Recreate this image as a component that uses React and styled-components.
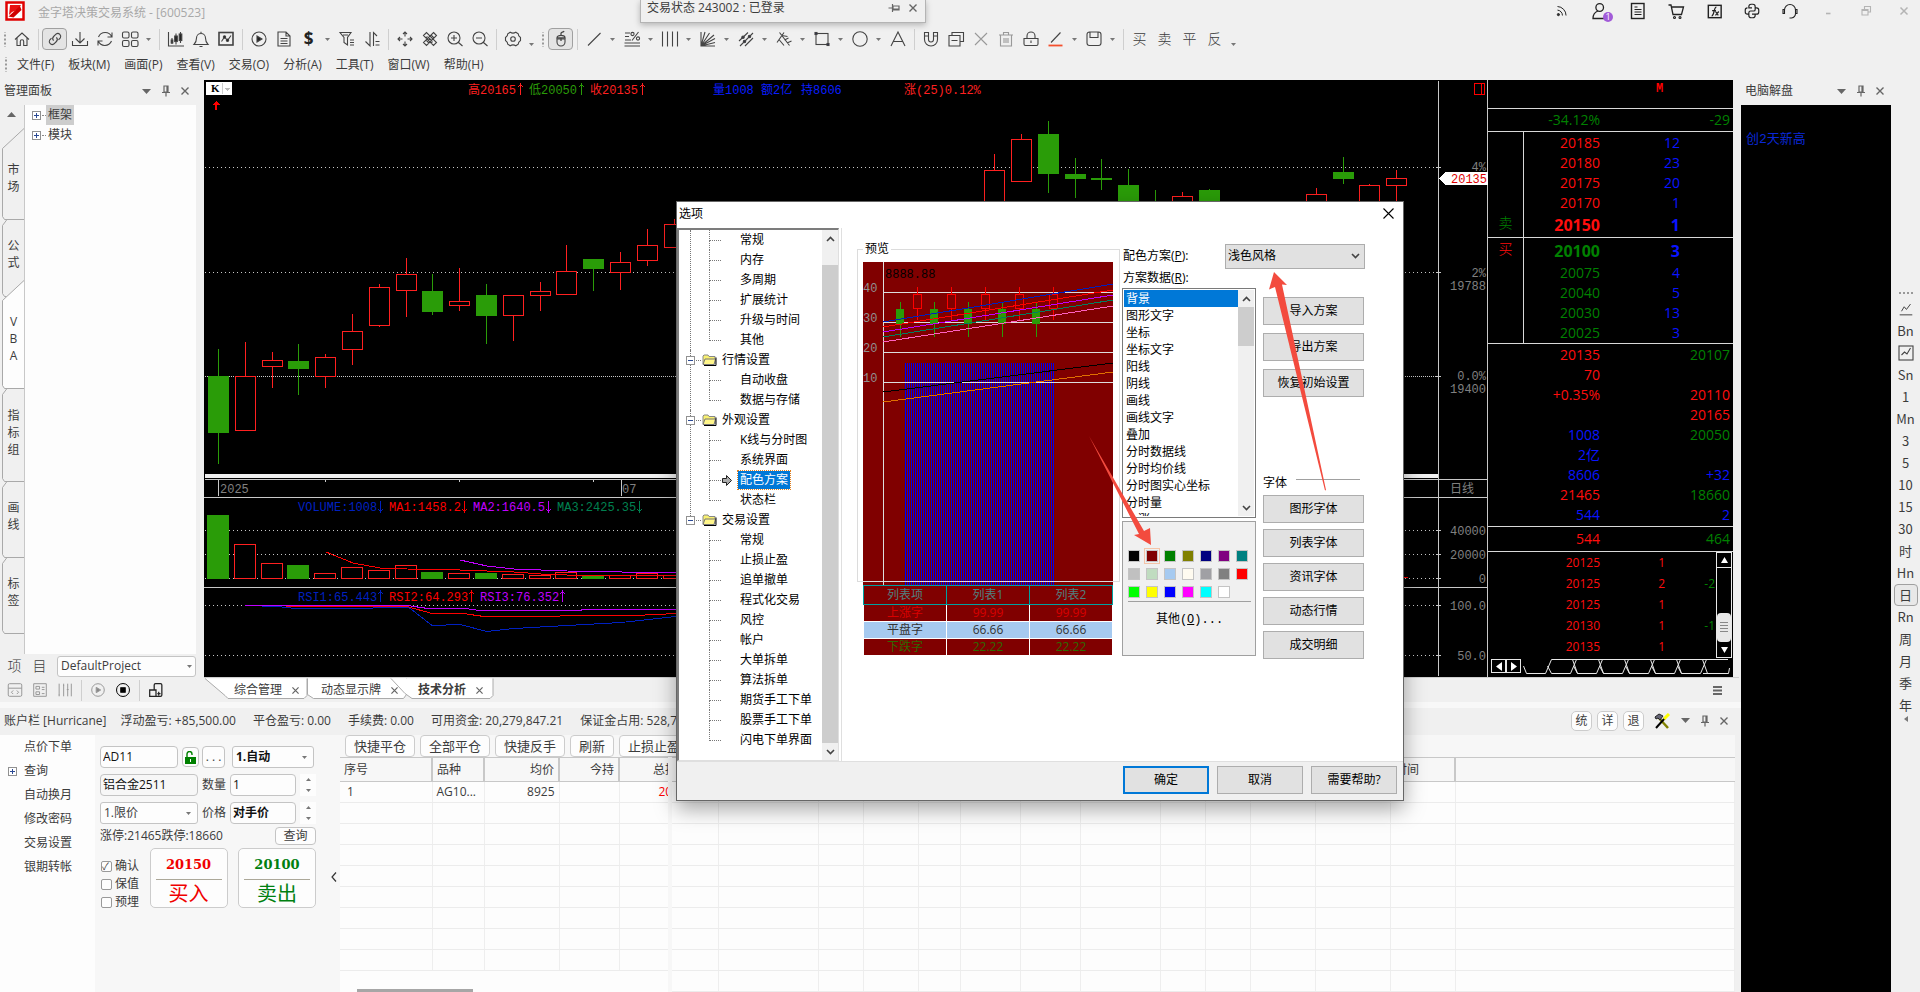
import React, { useState } from 'react'
import styled, { createGlobalStyle, css } from 'styled-components'

const GlobalStyle = createGlobalStyle`
    * { box-sizing: border-box; }
    html, body { margin: 0; height: 100%; overflow: hidden; }
    body, button, input, select {
        font-family: "Open Sans", "Noto Sans CJK SC", sans-serif;
        font-size: 12px;
        line-height: 16px;
        color: #3c3c3c;
    }
    body { background: #f0f0f0; }
    #root { height: 100%; }
    button { margin: 0; padding: 0; border: 0; background: none; white-space: nowrap; }
    ul { list-style: none; margin: 0; padding: 0; }
    svg { display: block; flex: none; }
    table { border-collapse: collapse; table-layout: fixed; }
`

const MONO = '"Liberation Mono", "Noto Sans CJK SC", monospace'

/* ---------- toolbar drawings, all on a 20x20 grid ---------- */

const ICONS = {
    home: <path d="M3 10.5L10 4l7 6.5M5 9v7.5h3.3v-4a1.7 1.7 0 0 1 3.4 0v4H15V9" />,
    link: <path d="M8.6 11.6a3 3 0 0 1 0-4.1l2.6-2.6a3 3 0 0 1 4.1 4.1l-1.8 1.8M11.4 8.4a3 3 0 0 1 0 4.1l-2.6 2.6A3 3 0 0 1 4.7 11l1.8-1.8" />,
    download: <path d="M10 3v10.5M5.5 9.5L10 14l4.500-4.5M2.500 12v4.5h15V12" />,
    refresh: <path d="M16.8 8A7.2 7.2 0 0 0 3.5 8M17 3.5V8h-4.5M3.2 12a7.2 7.2 0 0 0 13.3 0M3 16.5V12h4.5" />,
    grid: <><rect x="2.5" y="3" width="6.5" height="6" rx="1.5" /><rect x="11.5" y="3" width="6.5" height="6" rx="1.5" /><rect x="2.5" y="11.5" width="6.5" height="6" rx="1.5" /><rect x="11.5" y="11.5" width="6.5" height="6" rx="1.5" /></>,
    candles: <><path d="M2.5 3v14H18M6 9v6M10 4.5v11M14.5 3v11" /><g fill="#222"><rect x="5.2" y="11" width="1.6" height="3" /><rect x="8.7" y="7" width="2.600" height="5.5" /><rect x="13.2" y="5" width="2.6" height="6.5" /></g></>,
    bell: <path d="M3 15.5c2-2 2.500-3.5 2.5-6.5a4.500 4.5 0 0 1 9 0c0 3 .5 4.5 2.5 6.5zM10 4.500V2.8M8.5 17.5h3" />,
    chartBox: <><rect x="3" y="3.5" width="14" height="12.5" strokeWidth="1.6" /><path d="M5.5 12.5L8.500 8l3 3.5L15 6.5" /><g fill="#222"><circle cx="8.5" cy="8" r="1.2" /><circle cx="11.5" cy="11.200" r="1.2" /></g></>,
    play: <><circle cx="10" cy="10" r="7" /><path d="M8 7l5 3-5 3z" fill="#222" /></>,
    doc: <path d="M4 3h8l4 4v10H4zM12 3v4h4M6.5 9.5h7M6.5 12h7M6.5 14.5h7" />,
    filter: <path d="M3 3.500h11l-3.5 5V16L7 13.5v-5zM6 6h5M13 11h4M13 13.5h4M13 16h4" />,
    sort: <path d="M8 3v14l-4.5-4.5M11.5 17V3.5L15 7M13.5 12.5h4M13.5 16h4" />,
    move: <path d="M10 3v4.500M10 12.5V17M3 10h4.5M12.5 10H17M8 5l2-2 2 2M8 15l2 2 2-2M5 8l-2 2 2 2M15 8l2 2-2 2" />,
    ruler: <><path d="M3.5 6.5l3-3 10 10-3 3zM6 9l1.500-1.5M8.5 11.5L10 10M11 14l1.5-1.5" /><path d="M13.5 3.5l3 3-10 10-3-3zM11 6l3 3M8.5 8.5l3 3M6 11l3 3" /></>,
    zoomIn: <path d="M15 9a6 6 0 1 1-12 0 6 6 0 0 1 12 0zM13.5 13.500L17.5 17M9 6v6M6 9h6" />,
    zoomOut: <path d="M15 9a6 6 0 1 1-12 0 6 6 0 0 1 12 0zM13.5 13.5L17.5 17M6 9h6" />,
    gear: <><circle cx="10" cy="10" r="2.3" /><path d="M7.2 3.2c1.6 1 4 1 5.600 0l2.400 1.500c0 1.500.8 2.800 2.300 3.800v3c-1.500 1-2.300 2.300-2.300 3.800l-2.400 1.500c-1.600-1-4-1-5.600 0l-2.400-1.500c0-1.500-.8-2.800-2.300-3.800v-3c1.500-1 2.300-2.300 2.300-3.800z" /></>,
    mouse: <><path d="M6 10h8v3a4 4 0 0 1-8 0z" /><path d="M6 9c0-3.500 8-3.500 8 0zM10 7V4.500c0-1.5 2.500-1 3-2.5M10 9v3" strokeWidth="1.3" /></>,
    line: <path d="M4 16.5L16.5 4" />,
    percent: <><path d="M3 4h5M3 7.5h4M3 11h6M2.5 14H18M2.5 17H18M10 11.5L16.5 3" /><circle cx="10.5" cy="5" r="1.6" /><circle cx="16" cy="9.5" r="1.6" /></>,
    verticals: <path d="M2.5 2.5v15M7.500 2.5v15M12.5 2.500v15M17.5 2.5v15" />,
    fan: <path d="M3 3v14h14M3 17L7 3M3 17l8.500-13M3 17L16 6M3 17l14-7.500M3 17l14-3.500" />,
    channel: <><path d="M3 12L12 3.500M4 17L17 4M9 17l8-8" /><g fill="#334"><circle cx="7" cy="8.3" r="1.2" /><circle cx="8.5" cy="12.500" r="1.2" /><circle cx="13.5" cy="7.5" r="1.2" /></g></>,
    fork: <path d="M3 13.500L10 3.500M5.500 3.500l10 13M5 10.500l5 6M8 6.500l5.500 1M10.500 11l4-2M13 14l4.500-2" />,
    rect: <><rect x="4" y="4.5" width="12" height="11" /><g fill="#225"><rect x="3" y="3.5" width="2" height="2" /><rect x="15" y="14.5" width="2" height="2" /></g></>,
    circle: <circle cx="10" cy="10" r="7.2" />,
    letterA: <path d="M3 17l7-14 7 14M5.500 12.5h9" />,
    magnet: <path d="M3.5 3.5v7a6.500 6.5 0 0 0 13 0v-7h-4v7a2.500 2.5 0 0 1-5 0v-7zM3.5 7h4M12.5 7h4" />,
    copy: <path d="M6 6.5v-3h11.5v9H14M3 6.5h11V17H3zM5.5 11.5h6" />,
    cross: <path d="M4 4l12 12M16 4L4 16" />,
    trash: <path d="M3 6h14M7.5 6V3.5h5V6M4.5 6v11h11V6M8 9v5M10 9v5M12 9v5" />,
    lock: <path d="M3 9.500h14V15q0 1.500-1.500 1.500h-11Q3 16.500 3 15zM6 9V7a4 4 0 0 1 8 0v2M10 11.500V14" />,
    pen: <><path d="M5 13.500l9.500-10" /><path d="M2.5 16.500h14" stroke="#f4502e" strokeWidth="1.8" /></>,
    save: <path d="M5.500 3h9A2.500 2.500 0 0 1 17 5.500V14a2.500 2.500 0 0 1-2.500 2.500h-9A2.500 2.500 0 0 1 3 14V5.500A2.500 2.500 0 0 1 5.500 3zM6 3v5.500h8V3" />,
    rss: <><path d="M5 5a10 10 0 0 1 9.500 10M5 9a6 6 0 0 1 5.500 6" /><circle cx="6" cy="14" r="1.2" fill="#333" /></>,
    user: <path d="M13.500 6.500a3.800 3.800 0 1 1-7.600 0 3.800 3.800 0 0 1 7.600 0zM8 10c-3 1-5 3-5 7.500h13.500c0-2-.5-4-1.500-5" strokeWidth="1.3" />,
    news: <><rect x="3.5" y="2.5" width="12.5" height="15" strokeWidth="1.4" /><path d="M6.5 6h3M6.5 8.5h7M6.5 11h7M6.5 13.5h7" /></>,
    cart: <><path d="M2.500 4H5l2 9.500h8.500L17.500 6H6" strokeWidth="1.3" /><circle cx="8.5" cy="16.5" r="1" /><circle cx="14" cy="16.5" r="1" /></>,
    fx: <><rect x="3.5" y="3.5" width="13.5" height="13" strokeWidth="1.5" /><path d="M12 5.500c-3 0-2 9-5 9M7.500 9h4M11 10l3 4M14.500 10L11 14" strokeWidth="1.3" /></>,
    python: <path d="M10 6.500H6.500V5Q6.500 2.500 9 2.500h2Q13.500 2.500 13.500 5v3.500Q13.500 10 12 10H8.500Q6.500 10 6.500 12v1.500H5q-2.500 0-2.500-2.500V9Q2.500 6.500 5 6.500M10 13.500h3.500V15q0 2.500-2.500 2.500H9Q6.500 17.500 6.500 15v-2M13.500 6.500H15Q17.500 6.500 17.500 9v2q0 2.500-2.500 2.500h-2" strokeWidth="1.3" />,
    headset: <path d="M4.5 12V9a5.500 5.500 0 0 1 11 0v3M4.500 8.500H3v4h1.500zM15.500 8.500H17v4h-1.500zM15.500 12.500c0 2.500-1.500 4-4 4.500h-2" strokeWidth="1.1" />,
    minimize: <path d="M8 12.5h4.500" strokeWidth="1.6" />,
    restore: <path d="M8.5 8V5.500h6V11H12M6 8.500h6V14H6zM6 9.500h6" />,
    close: <path d="M6.5 6.5l7 7M13.500 6.500l-7 7" strokeWidth="1.5" />,
    codeWin: <path d="M4 3h12q1.500 0 1.500 1.500v11Q17.500 17 16 17H4q-1.500 0-1.500-1.500v-11Q2.500 3 4 3zM2.500 8h15M8 10.500l-2 2 2 2M12 10.500l2 2-2 2" />,
    formWin: <path d="M3 3h14v14H3zM5.500 6h4v3h-4zM5.500 12h4v3h-4zM12 7h3M12 9.500h3M12 14h3" />,
    sliders: <path d="M3.500 3v14M8.500 3v14M13 3v14M17 3v14M12 9.500h2M3 15.500h1M8 5h1" />,
    stop: <><circle cx="10" cy="10" r="7.2" /><rect x="7.5" y="7.5" width="5" height="5" fill="#000" /></>,
    tiles: <path d="M8 10V4.500Q8 3 9.500 3H15q1.500 0 1.500 1.500v11Q16.500 17 15 17H3v-7h5zM3 13.500V10M8 10h2v7M13 12v4M11.500 14h3.500" strokeWidth="1.4" />,
    trend: <path d="M5 12.5l3-5 2.5 3L15 4.500M3 16.500h14" />,
    trendBox: <><rect x="3" y="3" width="14" height="14" /><path d="M5.500 12l3-3 2.500 2 3.500-6" /></>,
}

const Icon = ({ name, size = 20, color = '#444' }) => (
    <svg width={size} height={size} viewBox="0 0 20 20" fill="none" stroke={color} strokeWidth="1.1" aria-hidden="true">
        {ICONS[name]}
    </svg>
)

const Caret = () => (
    <svg width="9" height="5" viewBox="0 0 9 5" aria-hidden="true"><path d="M0 0h9L4.500 5z" fill="#666" /></svg>
)

const TinyCaret = () => (
    <svg width="5" height="3" viewBox="0 0 5 3" aria-hidden="true"><path d="M0 0h5L2.500 3z" fill="#777" /></svg>
)

const Pin = () => (
    <svg width="10" height="12" viewBox="0 0 10 12" fill="none" stroke="#666" strokeWidth="1.2" aria-hidden="true">
        <path d="M3 1h4v6H3zM6 1v6M1 7.500h8M5 7.500v4" />
    </svg>
)

const SmallX = ({ size = 8, color = '#666' }) => (
    <svg width={size} height={size} viewBox="0 0 8 8" stroke={color} strokeWidth="1.4" aria-hidden="true">
        <path d="M.5.5l7 7M7.500.5l-7 7" />
    </svg>
)

/* ---------- window frame ---------- */

const Shell = styled.div`
    display: flex;
    flex-direction: column;
    height: 100vh;
`

const TitleBar = styled.header`
    display: flex;
    align-items: center;
    height: 25px;
    padding: 0 4px 3px 5px;
    color: #a8a8a8;
`

const TitleText = styled.span`
    margin-left: 13px;
    padding-top: 3px;
    flex: 1;
    color: #a8a8a8;
`

const TitleActions = styled.div`
    display: flex;
    align-items: center;
    gap: 14px;
`

const TitleButton = styled.button`
    display: grid;
    place-items: center;
    width: 24px;
    height: 22px;
`

const Badge = styled.span`
    position: absolute;
    left: 15px;
    top: 12px;
    width: 10px;
    height: 10px;
    border-radius: 5px;
    background: #a25bd8;
    color: #fff;
    font-size: 9px;
    line-height: 10px;
    text-align: center;
`

const UserButton = styled(TitleButton)`
    position: relative;
`

const StatusWindow = styled.div`
    position: absolute;
    top: 0;
    left: 640px;
    z-index: 5;
    display: flex;
    align-items: center;
    width: 286px;
    height: 23px;
    padding: 0 8px 7px 6px;
    background: #f0f0f0;
    border: 1px solid #b4b4b4;
    border-top: 0;
    box-shadow: 0 2px 6px rgba(0,0,0,0.25);
    span { flex: 1; }
    button:first-of-type { transform: rotate(90deg); margin-right: 10px; }
`

const Toolbar = styled.div`
    display: flex;
    align-items: center;
    height: 28px;
`

const Grip = styled.i`
    width: ${p => p.$w || 9}px;
    height: 15px;
    flex: none;
    background: radial-gradient(circle, #999 1px, transparent 1px) center / 4px 4px repeat-y;
`

const Separator = styled.i`
    flex: none;
    width: 8px;
    height: 21px;
    background: linear-gradient(#cfcfcf, #cfcfcf) center / 1px 100% no-repeat;
`

const ToolButton = styled.button`
    flex: none;
    display: grid;
    place-items: center;
    width: 25px;
    height: 22px;
    border-radius: 4px;
    ${p => p.$active && css`
        border: 1px solid #a0a0a0;
        background: #e4e4e4;
    `}
    ${p => p.$bold && css`
        font-size: 17px;
        font-weight: 700;
        color: #222;
    `}
    ${p => p.$glyph && css`
        font-size: 14px;
        font-weight: 300;
    `}
    ${p => p.$dim && css`opacity: 0.5;`}
`

const DropArrow = styled.button`
    flex: none;
    display: grid;
    place-items: ${p => (p.$low ? 'end center' : 'center')};
    width: 13px;
    height: 14px;
`

const MenuBar = styled.nav`
    display: flex;
    align-items: center;
    height: 27px;
    padding: 0 0 4px 1px;
`

const MenuItem = styled.button`
    padding: 0 7px;
`

const Main = styled.div`
    flex: 1;
    display: flex;
    min-height: 0;
`

const Workspace = styled.div`
    flex: 1;
    min-width: 0;
    display: flex;
    flex-direction: column;
`

const UpperRow = styled.div`
    flex: 1;
    min-height: 0;
    display: flex;
`

/* ---------- docked panels ---------- */

const SidePanel = styled.aside`
    flex: none;
    width: 204px;
    display: flex;
    flex-direction: column;
    padding-right: 8px;
`

const PanelHeadBar = styled.div`
    display: flex;
    align-items: center;
    flex: none;
    height: 25px;
    padding: 0 7px 3px 4px;
    gap: 10px;
    span { flex: 1; }
    button { display: grid; place-items: center; }
`

const PanelHead = ({ title }) => (
    <PanelHeadBar>
        <span>{title}</span>
        <button aria-label="菜单"><Caret /></button>
        <button aria-label="固定"><Pin /></button>
        <button aria-label="关闭"><SmallX /></button>
    </PanelHeadBar>
)

const PanelBody = styled.div`
    flex: 1;
    min-height: 0;
    display: flex;
`

const TabStrip = styled.div`
    position: relative;
    width: 24px;
    display: flex;
    flex-direction: column;
    padding-top: 7px;
    > svg:first-child { position: absolute; inset: 0; }
`

const StripArrow = styled.button`
    position: relative;
    height: 5px;
    display: grid;
    place-items: center;
    margin-bottom: 19px;
    transform: rotate(180deg);
`

const SideTab = styled.button`
    position: relative;
    display: flex;
    flex-direction: column;
    align-items: center;
    justify-content: center;
    height: ${p => p.$h}px;
    padding-left: 3px;
    line-height: 17px;
    span { display: block; line-height: 17px; }
`

const ModuleTree = styled.ul`
    flex: 1;
    background: #fdfdfd;
    border-left: 1px solid #c8c8c8;
    padding-left: 7px;
    li { display: flex; align-items: center; height: 20px; }
    i { width: 4px; margin-left: 1px; border-top: 1px dotted #888; }
`

const TreeLabel = styled.span`
    padding: 0 2px;
    line-height: 20px;
    background: ${p => (p.$selected ? '#cdcdcd' : 'transparent')};
`

const PlusBox = () => (
    <svg width="9" height="9" viewBox="0 0 9 9" fill="#fff" aria-hidden="true">
        <rect x=".5" y=".5" width="8" height="8" stroke="#919191" />
        <path d="M2 4.500h5M4.500 2v5" stroke="#2b4a94" />
    </svg>
)

const PanelFoot = styled.div`
    flex: none;
    height: 48px;
    padding-left: 2px;
`

const FootRow = styled.div`
    display: flex;
    align-items: center;
    height: 24px;
`

/* drop-down with its arrow laid in the same cell */
const SelectBox = styled.span`
    display: inline-grid;
    align-items: center;
    width: ${p => (p.$w ? p.$w + 'px' : 'auto')};
    flex: ${p => (p.$w ? 'none' : 1)};
    select, svg { grid-area: 1 / 1; }
    svg { justify-self: end; margin-right: 7px; pointer-events: none; }
    select {
        appearance: none;
        width: 100%;
        min-width: 0;
        height: 22px;
        padding: 0 3px;
        border: 1px solid #c4c4c4;
        border-radius: 3px;
        background: #fdfdfd;
        font-weight: ${p => (p.$bold ? 700 : 400)};
    }
`

const ProjectSelect = styled(SelectBox)`
    margin-left: 5px;
    select { height: 21px; }
    svg { margin-right: 4px; }
`

const ModeSelect = styled(SelectBox)`
    margin-left: 7px;
    select { color: #111; }
`

// label and height of each vertical tab
const SIDE_TABS = [['市场', 84], ['公式', 68], ['VBA', 101], ['指标组', 86], ['画线', 82], ['标签', 70]]

const Side = () => (
    <SidePanel>
        <PanelHead title="管理面板" />
        <PanelBody>
            <TabStrip>
                <svg width="24" height="549" viewBox="0 0 24 549" fill="none" stroke="#a9a9a9" aria-hidden="true">
                    <path d="M24 23.500L2.500 43.500v68l2 3H24M7 114.500l-4.500 6v68l2 3h2" />
                    <path d="M24 175.500L2.500 195.500v85l2 3H24" fill="#fdfdfd" />
                    <path d="M7 283.500l-4.500 6v84l2 3H24M7 376.500l-4.500 6v67l2 3H24M7 452.500l-4.500 6v67l2 3H24" />
                </svg>
                <StripArrow aria-label="上滚"><Caret /></StripArrow>
                {SIDE_TABS.map(([name, h]) => (
                    <SideTab key={name} $h={h}>{[...name].map(c => <span key={c}>{c}</span>)}</SideTab>
                ))}
            </TabStrip>
            <ModuleTree>
                <li><PlusBox /><i /><TreeLabel $selected>框架</TreeLabel></li>
                <li><PlusBox /><i /><TreeLabel>模块</TreeLabel></li>
            </ModuleTree>
        </PanelBody>
        <PanelFoot>
            <FootRow>
                <ToolButton $glyph>项</ToolButton>
                <ToolButton $glyph>目</ToolButton>
                <ProjectSelect>
                    <select aria-label="项目" defaultValue="DefaultProject"><option>DefaultProject</option></select>
                    <TinyCaret />
                </ProjectSelect>
            </FootRow>
            <FootRow>
                <ToolButton $dim aria-label="代码"><Icon name="codeWin" size={18} /></ToolButton>
                <ToolButton $dim aria-label="窗体"><Icon name="formWin" size={18} /></ToolButton>
                <ToolButton $dim aria-label="参数"><Icon name="sliders" size={18} /></ToolButton>
                <Separator />
                <ToolButton $dim aria-label="运行"><Icon name="play" size={18} /></ToolButton>
                <ToolButton aria-label="停止"><Icon name="stop" size={18} color="#000" /></ToolButton>
                <Separator />
                <ToolButton aria-label="组件"><Icon name="tiles" size={18} color="#222" /></ToolButton>
            </FootRow>
        </PanelFoot>
    </SidePanel>
)

/* ---------- chart ---------- */

const RED = '#ff2020'
const GREEN = '#2a9c08'

// [centre x, body top, body bottom, high, low, rising]
const CANDLES = [
    [219, 376, 432, 349, 464, 0], [246, 376, 430, 342, 430, 1], [273, 360, 366, 352, 388, 1],
    [299, 361, 368, 344, 395, 0], [326, 357, 376, 354, 388, 1], [353, 331, 349, 314, 365, 1],
    [380, 287, 325, 284, 327, 1], [407, 274, 290, 258, 317, 1], [433, 291, 311, 274, 315, 0],
    [460, 301, 305, 268, 311, 1], [487, 295, 315, 284, 344, 0], [514, 295, 315, 295, 341, 1],
    [541, 291, 295, 282, 311, 1], [567, 271, 294, 245, 294, 1], [594, 259, 268, 259, 291, 0],
    [621, 262, 272, 252, 290, 1], [648, 245, 260, 229, 266, 1], [675, 224, 247, 219, 247, 1],
    [995, 170, 230, 154, 230, 1], [1022, 139, 181, 134, 181, 1], [1049, 134, 173, 121, 193, 0],
    [1076, 174, 178, 158, 198, 0], [1102, 178, 179, 159, 190, 0], [1129, 185, 215, 169, 215, 0],
    [1156, 201, 215, 190, 215, 0], [1183, 196, 215, 192, 215, 1], [1210, 190, 215, 189, 215, 0],
    [1317, 194, 215, 188, 215, 1], [1344, 172, 178, 157, 184, 0], [1370, 185, 215, 184, 215, 1],
    [1397, 178, 185, 170, 201, 1],
]

const VOLUMES = [515, 544, 563, 565, 573, 567, 570, 565, 572, 573, 573, 574, 575, 572, 575, 575, 573, 575]

const ChartSvg = styled.svg`
    flex: 1;
    min-width: 0;
    width: 100%;
    height: 100%;
    background: #000;
    font-family: ${MONO};
    font-size: 12px;
    shape-rendering: crispEdges;
`

const AXIS_LABELS = [
    ['4%', 171], ['2%', 277], ['19788', 290], ['0.0%', 380], ['19400', 393],
    ['40000', 535], ['20000', 559], ['0', 583], ['100.0', 610], ['50.0', 660],
]

const HEAD_LABELS = [
    [468, 94, '#ff2020', '高20165', 1], [529, 94, GREEN, '低20050', 1], [590, 94, '#ff2020', '收20135', 1],
    [713, 94, '#0a1eff', '量1008'], [761, 94, '#0a1eff', '额2亿'], [801, 94, '#0a1eff', '持8606'],
    [904, 94, '#ff2020', '涨(25)0.12%'],
    [298, 511, '#0020c0', 'VOLUME:1008', -1], [389, 511, '#ff0000', 'MA1:1458.2', -1],
    [473, 511, '#c000ff', 'MA2:1640.5', -1], [557, 511, '#008050', 'MA3:2425.35', -1],
    [298, 601, '#0020c0', 'RSI1:65.443', 1], [389, 601, '#ff0000', 'RSI2:64.293', 1], [480, 601, '#c000ff', 'RSI3:76.352', 1],
]

const HeadLabel = ({ x, y, fill, text, dir }) => {
    const cjk = /^[高低收]/.test(text)
    const ax = x + 3.5 + (cjk ? 12 + (text.length - 1) * 7 + 2 : text.length * 7 + 2)
    return (
        <g fill={fill} stroke="none">
            <text x={x} y={y}>{text}</text>
            {dir === 1 && <path d={`M${ax} ${y - 10}v11M${ax - 2} ${y - 7}l2-3 2 3`} fill="none" stroke={fill} />}
            {dir === -1 && <path d={`M${ax} ${y - 10}v11M${ax - 2} ${y - 2}l2 3 2-3`} fill="none" stroke={fill} />}
        </g>
    )
}

const PriceChart = () => (
    <ChartSvg viewBox="204 80 1284 597" preserveAspectRatio="xMinYMin slice" role="img" aria-label="K线图">
        <g stroke="#c8c8c8" strokeDasharray="1 3">
            {[167.5, 272.5, 530.5, 554.5, 578.5, 605.5, 655.5].map(y => <path key={y} d={`M205 ${y}H1438`} />)}
            <path d="M205 376.500H1438" strokeDasharray="1 1" />
        </g>
        {CANDLES.map(([x, top, bottom, high, low, up]) => (
            <g key={x} stroke={up ? RED : GREEN} fill={up ? '#000' : GREEN}>
                <path d={`M${x - 0.5} ${high}V${low}`} />
                <rect x={x - 10.5} y={top + 0.5} width="20" height={bottom - top - 0.5} />
            </g>
        ))}
        {VOLUMES.map((top, i) => {
            const [x, , , , , up] = CANDLES[i]
            return <rect key={x} x={x - 11.5} y={top + 0.5} width="21" height={578 - top} stroke={up ? RED : GREEN} fill={up ? '#000' : GREEN} />
        })}
        <g fill="none">
            <path d="M326 552l27 11 27 5 27 1 53 1 27 1 27 1 27 2 26 1h109" stroke="#f00" />
            <path d="M460 560l27 6 27 3 53 2 109 2" stroke="#c000ff" />
            <path d="M245 605.500l33 1 17 2h43l71-1 23 18 28-1 27 7 27-3 53-3 54-3 55-6" stroke="#0020c0" />
            <path d="M286 606.500h121l25 7h31l21 3h69l14-1h68l41-2" stroke="#f00" />
            <path d="M245 605.500h162l21 3h37l15 2h100l3-1h93" stroke="#c000ff" />
            <path d="M1398 577.500h10" stroke="#f00" />
        </g>
        <path d="M205 474h1233v4H205z" fill="#f0f0f0" />
        <g fill="none" stroke="#c8c8c8">
            <path d="M205 479.500h1282M204 497.500h1284M204 587.500h1284M1438.500 81v595M1487.500 80v597" />
            <path d="M218.500 480v16M621.500 480v16M325.500 480v2M459.500 480v2M593.500 480v2" />
            <path d="M1436 167.500h5M1436 272.500h5M1436 376.500h5M1436 530.500h5M1436 554.500h5M1436 578.500h5M1436 605.500h5M1436 655.500h5" />
        </g>
        <g fill="#808080">
            <text x="220" y="493">2025</text>
            <text x="622" y="493">07</text>
            <text x="1450" y="493">日线</text>
            {AXIS_LABELS.map(([t, y]) => <text key={t} x="1486" y={y} textAnchor="end">{t}</text>)}
        </g>
        {HEAD_LABELS.map(([x, y, fill, text, dir]) => <HeadLabel key={text} {...{ x, y, fill, text, dir }} />)}
        <path d="M1439 178.500l6-6.500h43v13h-43z" fill="#fff" />
        <text x="1487" y="183" fill="#e00000" textAnchor="end">20135</text>
        <path d="M1474.500 83.500h10v11h-10zM1481.500 83.500v11" fill="none" stroke="#f00" />
        <rect x="206" y="82" width="26" height="13" rx="1" fill="#fff" />
        <text x="211" y="92" fill="#000" fontFamily="Liberation Serif, serif" fontSize="11" fontWeight="700">K</text>
        <path d="M222.500 83v11" stroke="#ccc" />
        <path d="M225 88h5l-2.500 3z" fill="#bbb" />
        <path d="M216 101l4 4h-3v5h-2v-5h-3z" fill="#f00" />
    </ChartSvg>
)

/* ---------- quote panel ---------- */

const COLORS = { r: '#ff0d0d', g: '#008000', b: '#0a14ff' }

const Quotes = styled.section`
    flex: none;
    width: 245px;
    display: flex;
    flex-direction: column;
    background: #000;
    font-size: 14px;
`

const QuoteLine = styled.div`
    display: flex;
    align-items: center;
    height: ${p => p.$h}px;
    border-bottom: ${p => (p.$rule ? '1px solid #d8d8d8' : '0')};
    padding-right: 3px;
`

const Num = styled.span`
    width: ${p => p.$w}px;
    text-align: right;
    color: ${p => COLORS[p.$c]};
    white-space: nowrap;
`

const Marker = styled.div`
    margin: 0 auto 10px 168px;
    height: 16px;
    color: #f00;
    font-family: ${MONO};
    font-size: 12px;
    font-weight: 700;
`

const Book = styled.div`
    display: flex;
    height: 106px;
    border-bottom: 1px solid #d8d8d8;
`

const BookSide = styled.div`
    display: flex;
    align-items: ${p => (p.$end ? 'flex-end' : 'flex-start')};
    justify-content: center;
    width: 36px;
    padding: 2px 0 5px;
    border-right: 1px solid #d8d8d8;
    color: ${p => COLORS[p.$c]};
    font-weight: 300;
    font-size: 14px;
    line-height: 18px;
`

const BookTable = styled.table`
    margin-top: 1px;
    width: 156px;
    td {
        height: 20px;
        padding: 0;
        text-align: right;
        line-height: 20px;
        color: ${p => COLORS[p.$c]};
    }
    td + td { color: ${COLORS.b}; }
    tr.best td { height: 24px; font-size: 16px; font-weight: 700; line-height: 24px; }
`

const BookHalf = ({ side, sideColor, c, rows, bestLast }) => (
    <Book>
        <BookSide $end={bestLast} $c={sideColor}>{side}</BookSide>
        <BookTable $c={c}>
            <colgroup><col width="76" /><col width="80" /></colgroup>
            <tbody>
                {rows.map(([price, vol, best]) => (
                    <tr key={price} className={best ? 'best' : ''}><td>{price}</td><td>{vol}</td></tr>
                ))}
            </tbody>
        </BookTable>
    </Book>
)

const Stats = styled.div`
    padding-top: 1px;
    height: 183px;
    border-bottom: 1px solid #d8d8d8;
`

const STATS = [
    ['20135', 'r', '20107', 'g'], ['70', 'r', '', 'g'], ['+0.35%', 'r', '20110', 'r'],
    ['', 'r', '20165', 'r'], ['1008', 'b', '20050', 'g'], ['2亿', 'b', '', 'b'],
    ['8606', 'b', '+32', 'b'], ['21465', 'r', '18660', 'g'], ['544', 'b', '2', 'b'],
]

const Ticks = styled.div`
    flex: 1;
    display: flex;
    padding-right: 1px;
    table { width: 227px; font-size: 12px; }
    td { height: 21px; padding: 0; text-align: right; color: ${COLORS.r}; line-height: 16px; }
    td:last-child { color: ${COLORS.g}; }
`

const TickScroll = styled.div`
    width: 16px;
    margin-left: 1px;
    border: 1px solid #e8e8e8;
    display: flex;
    flex-direction: column;
    button { display: grid; place-items: center; height: 15px; }
    button:first-child { border-bottom: 1px solid #e8e8e8; }
`

const TickThumb = styled.div`
    margin-top: auto;
    height: 29px;
    border-radius: 4px;
    background: repeating-linear-gradient(#888 0 1px, #e8e8e8 1px 3px) center / 8px 11px no-repeat #e8e8e8;
`

const QuoteNav = styled.div`
    display: flex;
    align-items: flex-start;
    height: 19px;
    padding: 1px 0 0 3px;
    button { width: 15px; height: 14px; border: 1px solid #e8e8e8; display: grid; place-items: center; }
    > svg { margin-left: 2px; }
`

const QuotePanel = () => (
    <Quotes>
        <QuoteLine $h={29} $rule><Marker>M</Marker></QuoteLine>
        <QuoteLine $h={23} $rule><Num $w={112} $c="g">-34.12%</Num><Num $w={130} $c="g">-29</Num></QuoteLine>
        <BookHalf side="卖" sideColor="g" c="r" bestLast rows={[['20185', 12], ['20180', 23], ['20175', 20], ['20170', 1], ['20150', 1, true]]} />
        <BookHalf side="买" sideColor="r" c="g" rows={[['20100', 3, true], ['20075', 4], ['20040', 5], ['20030', 13], ['20025', 3]]} />
        <Stats>
            {STATS.map(([a, ac, b, bc]) => (
                <QuoteLine key={a + b} $h={20}><Num $w={112} $c={ac}>{a}</Num><Num $w={130} $c={bc}>{b}</Num></QuoteLine>
            ))}
        </Stats>
        <QuoteLine $h={25} $rule><Num $w={112} $c="r">544</Num><Num $w={130} $c="g">464</Num></QuoteLine>
        <Ticks>
            <table>
                <colgroup><col width="112" /><col width="65" /><col width="50" /></colgroup>
                <tbody>
                    <tr><td>20125</td><td>1</td><td /></tr>
                    <tr><td>20125</td><td>2</td><td>-2</td></tr>
                    <tr><td>20125</td><td>1</td><td /></tr>
                    <tr><td>20130</td><td>1</td><td>-1</td></tr>
                    <tr><td>20135</td><td>1</td><td /></tr>
                </tbody>
            </table>
            <TickScroll>
                <button aria-label="上滚"><svg width="7" height="6" viewBox="0 0 7 6"><path d="M3.500 0L7 6H0z" fill="#fff" /></svg></button>
                <TickThumb />
                <button aria-label="下滚"><svg width="7" height="6" viewBox="0 0 7 6"><path d="M3.500 6L7 0H0z" fill="#fff" /></svg></button>
            </TickScroll>
        </Ticks>
        <QuoteNav>
            <button aria-label="左滚"><svg width="6" height="9" viewBox="0 0 6 9"><path d="M6 0v9L0 4.500z" fill="#fff" /></svg></button>
            <button aria-label="右滚"><svg width="6" height="9" viewBox="0 0 6 9"><path d="M0 0v9l6-4.500z" fill="#fff" /></svg></button>
            <svg width="207" height="15" viewBox="0 0 207 15" fill="none" stroke="#e8e8e8" aria-hidden="true">
                <path d="M.5 7l3 7.500h19L28.500.5H205M206.500 9l-1 5.500h-17" />
                {[0, 1, 2, 3, 4, 5].map(i => <path key={i} d={`M${24.5 + i * 26} 7l4 7.500h19l6-14M${49.5 + i * 26} .5l5 14`} />)}
                <path d="M180 14.500h20" />
            </svg>
        </QuoteNav>
    </Quotes>
)

const ChartColumn = styled.div`
    flex: 1;
    min-width: 0;
    display: flex;
    flex-direction: column;
    padding-right: 2px;
`

const ChartRow = styled.div`
    flex: 1;
    min-height: 0;
    display: flex;
    background: #000;
    margin-right: 6px;
`

const PageTabs = styled.div`
    position: relative;
    display: flex;
    align-items: center;
    height: 25px;
    padding-left: 30px;
    border-top: 1px solid #cfcfcf;
    > svg:first-child { position: absolute; left: 0; top: 0; }
`

const PageTab = styled.div`
    position: relative;
    display: flex;
    align-items: center;
    gap: 10px;
    margin-right: ${p => p.$gap}px;
    button:first-child { font-weight: ${p => (p.$active ? 700 : 400)}; }
`

const PageMenu = styled.button`
    margin: 0 17px 0 auto;
`

const Charts = () => (
    <ChartColumn>
        <ChartRow>
            <PriceChart />
            <QuotePanel />
        </ChartRow>
        <PageTabs>
            <svg width="292" height="22" viewBox="0 0 292 22" fill="#fff" stroke="#aaa" aria-hidden="true">
                <path d="M1 .5l20 17 3 3h76l3-3V.5" />
                <path d="M103.500.5v16l6 4h90l3-4V.5" />
                <path d="M187 .5l14 15 7 5h78l3-3V.5" />
            </svg>
            <PageTab $gap={22}><button>综合管理</button><button aria-label="关闭"><SmallX size={7} /></button></PageTab>
            <PageTab $gap={20}><button>动态显示牌</button><button aria-label="关闭"><SmallX size={7} /></button></PageTab>
            <PageTab $active><button>技术分析</button><button aria-label="关闭"><SmallX size={7} /></button></PageTab>
            <PageMenu aria-label="窗口列表">
                <svg width="9" height="9" viewBox="0 0 9 9" fill="#666"><path d="M0 0h9v2H0zM0 3.500h9v2H0zM0 7h9v2H0z" /></svg>
            </PageMenu>
        </PageTabs>
    </ChartColumn>
)

/* ---------- account area ---------- */

const Account = styled.section`
    flex: none;
    height: 290px;
    padding-right: 6px;
    display: flex;
    flex-direction: column;
    border-top: 6px solid #f8f8f8;
`

const AccountBar = styled.div`
    display: flex;
    align-items: center;
    height: 27px;
    padding: 0 7px 2px 4px;
    > span { margin-right: 17px; white-space: nowrap; }
    > span:first-child { margin-right: 14px; }
`

const AccountTools = styled.div`
    margin-left: auto;
    display: flex;
    align-items: center;
    gap: 10px;
    button { display: grid; place-items: center; }
`

const PillGroup = styled.div`
    display: flex;
    gap: 5px;
    button {
        width: 21px;
        height: 20px;
        border: 1px solid #ccc;
        border-radius: 5px;
        background: #fdfdfd;
    }
`

const AccountBody = styled.div`
    flex: 1;
    min-height: 0;
    display: flex;
    background: #f7f7f7;
`

const AccountTree = styled.ul`
    width: 95px;
    background: #fdfdfd;
    li {
        display: grid;
        grid-template-columns: 16px 1fr;
        align-items: center;
        height: 24px;
        padding-left: 8px;
    }
    button { grid-column: 2; text-align: left; }
`

const OrderForm = styled.form`
    width: 232px;
    padding: 11px 11px 0 5px;
    display: flex;
    flex-direction: column;
    gap: 6px;
`

const FormRow = styled.div`
    display: flex;
    align-items: center;
    height: 22px;
    label { width: 34px; padding-left: 4px; }
`

const TextField = styled.input`
    flex: none;
    width: ${p => p.$w}px;
    height: 22px;
    min-width: 0;
    padding: 0 2px 2px;
    border: 1px solid #c4c4c4;
    border-radius: 4px;
    background: ${p => (p.readOnly ? '#f7f7f7' : '#fdfdfd')};
    font-weight: ${p => (p.$bold ? 700 : 400)};
    color: #111;
`

const FieldButton = styled.button`
    width: ${p => p.$w}px;
    height: ${p => p.$h || 22}px;
    border: 1px solid #c4c4c4;
    border-radius: 4px;
    background: #fdfdfd;
    display: grid;
    place-items: center;
    margin-left: ${p => p.$ml}px;
`

const SpinButtons = styled.span`
    margin-left: 4px;
    width: 17px;
    height: 22px;
    display: grid;
    place-items: center;
    background: #fdfdfd;
    button:first-child { transform: rotate(180deg); }
`

const Spin = () => (
    <SpinButtons>
        <button type="button" aria-label="加"><TinyCaret /></button>
        <button type="button" aria-label="减"><TinyCaret /></button>
    </SpinButtons>
)

const LimitRow = styled.div`
    display: flex;
    align-items: center;
    justify-content: space-between;
    height: 18px;
    margin: -3px 0;
`

const TradeRow = styled.div`
    display: flex;
    justify-content: space-between;
`

const Checks = styled.div`
    padding-top: 9px;
    label { display: flex; align-items: center; gap: 3px; height: 18px; }
    input {
        appearance: none;
        width: 11px;
        height: 11px;
        margin: 0 0 0 1px;
        border: 1px solid #999;
        border-radius: 2px;
        background: #fdfdfd;
    }
    input:checked::after { content: "✓"; display: block; font-size: 10px; line-height: 9px; }
`

const TradeButton = styled.button`
    width: 78px;
    height: 60px;
    padding: 1px 5px 0;
    border: 1px solid #ccc;
    border-radius: 5px;
    background: #fdfdfd;
    color: ${p => p.$c};
    b {
        display: block;
        height: 30px;
        border-bottom: 1px solid #aca899;
        font: bold 13px/30px "DejaVu Serif", serif;
    }
    span { font: 20px/28px "Liberation Serif", "Noto Sans CJK SC", serif; }
`

const CollapseBar = styled.button`
    width: 13px;
    display: grid;
    place-items: center;
    padding-top: 27px;
`

const Holdings = styled.div`
    flex: 1;
    min-width: 0;
    display: flex;
    flex-direction: column;
`

const HoldingTools = styled.div`
    display: flex;
    gap: 5px;
    height: 22px;
    padding-left: 5px;
    button {
        height: 22px;
        padding: 0 8px;
        border: 1px solid #ccc;
        border-radius: 4px;
        background: #fdfdfd;
        font-size: 13px;
    }
`

const TablePair = styled.div`
    flex: 1;
    min-height: 0;
    display: flex;
    gap: 4px;
    overflow: hidden;
`

const TablePane = styled.div`
    flex: ${p => (p.$w ? 'none' : 1)};
    width: ${p => (p.$w ? p.$w + 'px' : 'auto')};
    min-width: 0;
    overflow: hidden;
    display: flex;
    flex-direction: column;
    justify-content: space-between;
    background: #fdfdfd;
`

const Grid = styled.table`
    width: ${p => (p.$w ? p.$w + 'px' : '100%')};
    th, td {
        height: 21px;
        padding: 0 4px;
        text-align: left;
        font-weight: 400;
        border-right: 1px solid #eee;
        border-bottom: 1px solid #ececec;
        white-space: nowrap;
        overflow: hidden;
    }
    th { height: 24px; background: #f7f7f7; border: solid #c8c8c8; border-width: 1px 2px 1px 0; }
    th:last-child { border-right: 0; }
    .num { text-align: right; }
    .loss { color: #f00; padding-left: 39px; }
`

const HScroll = styled.div`
    width: 116px;
    height: 3px;
    margin-left: 17px;
    background: #a6a6a6;
`

const EMPTY_ROWS = Array.from({ length: 11 }, (_, i) => i)
const WIDE_COLS = [46, 100, 45, 55, 42, 60, 60, 80, 45, 45, 65, 75, 65]

const AccountPanel = () => (
    <Account>
        <AccountBar>
            <span>账户栏 [Hurricane]</span>
            <span>浮动盈亏: +85,500.00</span>
            <span>平仓盈亏: 0.00</span>
            <span>手续费: 0.00</span>
            <span>可用资金: 20,279,847.21</span>
            <span>保证金占用: 528,760.00</span>
            <AccountTools>
                <PillGroup><button>统</button><button>详</button><button>退</button></PillGroup>
                <button aria-label="工具">
                    <svg width="17" height="16" viewBox="0 0 17 16" aria-hidden="true">
                        <path d="M4 4l10 11" stroke="#808000" strokeWidth="2.5" />
                        <path d="M2 15L11 5" stroke="#000" strokeWidth="2" />
                        <path d="M10 6l5-5" stroke="#ff0" strokeWidth="3" />
                        <path d="M1 4l4-3 4 2-3 4-2-2-2 1z" fill="#667" stroke="#222" />
                    </svg>
                </button>
                <button aria-label="菜单"><Caret /></button>
                <button aria-label="固定"><Pin /></button>
                <button aria-label="关闭"><SmallX /></button>
            </AccountTools>
        </AccountBar>
        <AccountBody>
            <AccountTree>
                <li><button>点价下单</button></li>
                <li><PlusBox /><button>查询</button></li>
                <li><button>自动换月</button></li>
                <li><button>修改密码</button></li>
                <li><button>交易设置</button></li>
                <li><button>银期转帐</button></li>
            </AccountTree>
            <OrderForm onSubmit={e => e.preventDefault()}>
                <FormRow>
                    <TextField $w={78} defaultValue="AD11" aria-label="合约" />
                    <FieldButton type="button" $w={17} $h={20} $ml={4} aria-label="锁定">
                        <svg width="11" height="13" viewBox="0 0 11 13"><path d="M2 6V3a2.500 2.500 0 0 1 5 0v1" fill="none" stroke="#008000" strokeWidth="1.4" /><path d="M0 6h11v7H0z" fill="#008000" /><path d="M5 8h1v3H5z" fill="#fff" /></svg>
                    </FieldButton>
                    <FieldButton type="button" $w={23} $ml={3}>. . .</FieldButton>
                    <ModeSelect $w={82} $bold>
                        <select aria-label="开平" defaultValue="1.自动"><option>1.自动</option></select>
                        <TinyCaret />
                    </ModeSelect>
                </FormRow>
                <FormRow>
                    <TextField $w={98} defaultValue="铝合金2511" readOnly aria-label="品种" />
                    <label htmlFor="qty">数量</label>
                    <TextField id="qty" $w={66} defaultValue="1" />
                    <Spin />
                </FormRow>
                <FormRow>
                    <SelectBox $w={98}>
                        <select aria-label="报价方式" defaultValue="1.限价"><option>1.限价</option></select>
                        <TinyCaret />
                    </SelectBox>
                    <label htmlFor="price">价格</label>
                    <TextField id="price" $w={66} $bold defaultValue="对手价" />
                    <Spin />
                </FormRow>
                <LimitRow>
                    <span>涨停:21465跌停:18660</span>
                    <FieldButton type="button" $w={41} $h={18}>查询</FieldButton>
                </LimitRow>
                <TradeRow>
                    <Checks>
                        <label><input type="checkbox" defaultChecked />确认</label>
                        <label><input type="checkbox" />保值</label>
                        <label><input type="checkbox" />预埋</label>
                    </Checks>
                    <TradeButton type="button" $c="#f00000"><b>20150</b><span>买入</span></TradeButton>
                    <TradeButton type="button" $c="#008010"><b>20100</b><span>卖出</span></TradeButton>
                </TradeRow>
            </OrderForm>
            <CollapseBar aria-label="收起">
                <svg width="6" height="10" viewBox="0 0 6 10" fill="none" stroke="#333" strokeWidth="1.2"><path d="M5 .5L1 5l4 4.500" /></svg>
            </CollapseBar>
            <Holdings>
                <HoldingTools>
                    <button>快捷平仓</button><button>全部平仓</button><button>快捷反手</button><button>刷新</button><button>止损止盈</button>
                </HoldingTools>
                <TablePair>
                    <TablePane $w={328}>
                        <Grid $w={353}>
                            <colgroup><col width="92" /><col width="52" /><col width="75" /><col width="60" /><col width="74" /></colgroup>
                            <thead><tr><th>序号</th><th>品种</th><th className="num">均价</th><th className="num">今持</th><th className="num">总持仓</th></tr></thead>
                            <tbody>
                                <tr><td>&nbsp;1</td><td>AG10...</td><td className="num">8925</td><td /><td className="loss">20</td></tr>
                                {EMPTY_ROWS.slice(3).map(i => <tr key={i}><td /><td /><td /><td /><td /></tr>)}
                            </tbody>
                        </Grid>
                        <HScroll />
                    </TablePane>
                    <TablePane>
                        <Grid>
                            <colgroup>{WIDE_COLS.map((w, i) => <col key={i} width={w} />)}<col /></colgroup>
                            <thead><tr>{WIDE_COLS.map((w, i) => <th key={i}>{i === 12 ? '时间' : ''}</th>)}<th /></tr></thead>
                            <tbody>
                                {EMPTY_ROWS.map(i => <tr key={i}>{WIDE_COLS.map((w, j) => <td key={j} />)}<td /></tr>)}
                            </tbody>
                        </Grid>
                    </TablePane>
                </TablePair>
            </Holdings>
        </AccountBody>
    </Account>
)

/* ---------- right edge ---------- */

const Insight = styled.aside`
    flex: none;
    width: 150px;
    display: flex;
    flex-direction: column;
`

const InsightBody = styled.div`
    flex: 1;
    padding: 27px 5px;
    background: #000;
    color: #0a28d8;
    font-size: 13px;
    font-family: ${MONO};
`

const PeriodBar = styled.nav`
    flex: none;
    width: 29px;
    display: flex;
    flex-direction: column;
    align-items: center;
    padding-top: 212px;
`

const PeriodDots = styled.i`
    width: 14px;
    height: 2px;
    margin-bottom: 4px;
    border-top: 2px dotted #999;
`

const PeriodButton = styled.button`
    display: grid;
    place-items: center;
    width: 24px;
    height: 22px;
    font-family: "Noto Sans CJK SC", sans-serif;
    font-size: 13px;
    border-radius: 4px;
    border: 1px solid ${p => (p.$active ? '#a0a0a0' : 'transparent')};
    background: ${p => (p.$active ? '#e8e8e8' : 'none')};
`

const PERIODS = ['Bn', 'trendBox', 'Sn', '1', 'Mn', '3', '5', '10', '15', '30', '时', 'Hn', '日', 'Rn', '周', '月', '季', '年']

/* ---------- options dialog ---------- */

const Dialog = styled.div`
    position: absolute;
    left: 676px;
    top: 201px;
    z-index: 10;
    width: 728px;
    display: flex;
    flex-direction: column;
    border: 1px solid #666;
    background: #fff;
    color: #000;
    box-shadow: 0 8px 20px rgba(0,0,0,0.35);
    button, select, input { color: #000; }
`

const DialogTitle = styled.div`
    display: flex;
    align-items: center;
    justify-content: space-between;
    height: 26px;
    padding: 0 9px 3px 2px;
`

const DialogBody = styled.div`
    display: flex;
    height: 533px;
`

const OptionTreeBox = styled.div`
    display: flex;
    flex: none;
    width: 162px;
    border: solid;
    border-width: 2px 1px 1px 2px;
    border-color: #7c7c7c #dfdfdf #dfdfdf #7c7c7c;
`

const OptionTree = styled.ul`
    flex: 1;
    padding-left: 11px;
    > li { position: relative; }
    /* trunk joining the top level groups */
    > li:not(:last-child)::before {
        content: "";
        position: absolute;
        left: 0;
        top: 0;
        bottom: -10px;
        border-left: 1px dotted #777;
    }
`

const GroupRow = styled.div`
    position: relative;
    display: flex;
    align-items: center;
    height: 20px;
    margin-left: -4px;
    i { width: 5px; margin: 0 1px; border-top: 1px dotted #777; }
    span { margin-left: 5px; }
`

const Leaves = styled.ul`
    margin-left: 19px;
`

const Leaf = styled.li`
    position: relative;
    display: flex;
    align-items: center;
    height: 20px;
    padding-left: 29px;
    &::before {
        content: "";
        position: absolute;
        left: 0;
        top: 0;
        width: 11px;
        height: 10px;
        border-left: 1px dotted #777;
        border-bottom: 1px dotted #777;
    }
    &:not(:last-child)::after {
        content: "";
        position: absolute;
        left: 0;
        top: 10px;
        height: 10px;
        border-left: 1px dotted #777;
    }
    svg { position: absolute; left: 13px; }
    span {
        padding: 0 2px;
        line-height: 18px;
        ${p => p.$selected && css`
            background: #0078d7;
            color: #fff;
            outline: 1px dotted #e08020;
        `}
    }
`

const ScrollTrack = styled.div`
    flex: none;
    width: 16px;
    display: flex;
    flex-direction: column;
    background: #f0f0f0;
    button { display: grid; place-items: center; height: 17px; }
`

const ScrollThumb = styled.div`
    height: ${p => p.$size}px;
    margin: ${p => p.$offset}px 0 auto;
    background: #cdcdcd;
`

const Chevron = ({ up }) => (
    <svg width="9" height="6" viewBox="0 0 9 6" fill="none" stroke="#444" strokeWidth="1.6" aria-hidden="true">
        <path d={up ? 'M1 5l3.500-3.500L8 5' : 'M1 1l3.500 3.500L8 1'} />
    </svg>
)

const Scrollbar = ({ size, offset = 0 }) => (
    <ScrollTrack>
        <button aria-label="上滚"><Chevron up /></button>
        <ScrollThumb $size={size} $offset={offset} />
        <button aria-label="下滚"><Chevron /></button>
    </ScrollTrack>
)

const DialogContent = styled.div`
    flex: 1;
    display: flex;
    align-items: flex-start;
    margin-left: 2px;
    border-left: 1px solid #dfdfdf;
    padding: 13px 0 0 15px;
`

const PreviewBox = styled.fieldset`
    flex: none;
    width: 263px;
    height: 341px;
    margin: 0;
    padding: 0 5px;
    border: 1px solid #dcdcdc;
    legend { padding: 0 2px; }
    > svg { margin-top: 5px; font-family: ${MONO}; }
`

const PreviewTable = styled.table`
    width: 250px;
    background: #800000;
    th, td {
        height: 17px;
        padding: 0;
        border: 1px solid #fff;
        text-align: center;
        font-weight: 400;
        font-size: 12px;
        line-height: 14px;
    }
    th { height: 19px; border-color: #00a0a0; color: #508080; }
    tr.up td { color: #d80000; }
    tr.flat td { background: #a6caf0; color: #333; }
    tr.down td { color: #2e6a00; }
`

const SchemeColumn = styled.div`
    margin-left: 2px;
    padding-top: 2px;
`

const SchemeRow = styled.div`
    display: flex;
    align-items: center;
    height: 26px;
    label { width: 103px; padding-left: 1px; }
`

const SchemeSelect = styled(SelectBox)`
    svg { margin-right: 5px; }
    select { height: 25px; padding: 0 2px; background: #e1e1e1; border-color: #adadad; border-radius: 0; }
`

const ListLabel = styled.div`
    height: 19px;
    padding-left: 1px;
    line-height: 18px;
`

const SchemeCols = styled.div`
    display: flex;
    gap: 7px;
`

const ListBox = styled.div`
    display: flex;
    width: 134px;
    height: 230px;
    padding: 1px;
    border: 1px solid #7a7a7a;
    overflow: hidden;
    ul { flex: 1; height: 226px; overflow: hidden; }
`

const ListItem = styled.li`
    height: 17px;
    padding-left: 2px;
    line-height: 17px;
    white-space: nowrap;
    background: ${p => (p.$selected ? '#0078d7' : 'none')};
    color: ${p => (p.$selected ? '#fff' : '#000')};
`

const ColorPanel = styled.div`
    width: 134px;
    height: 135px;
    margin-top: 3px;
    padding: 28px 4px 0 5px;
    background: #f0f0f0;
    border: 1px solid #a0a0a0;
    text-align: center;
`

const Swatches = styled.div`
    display: grid;
    grid-template-columns: repeat(7, 12px);
    gap: 6px;
    padding-bottom: 3px;
    border-bottom: 1px solid #a0a0a0;
`

const Swatch = styled.button`
    height: 12px;
    border: 1px solid #c4c4c4;
    background: ${p => p.$c};
    outline: ${p => (p.$selected ? '1px solid #f4c4a8' : 'none')};
    outline-offset: 1px;
`

const OtherColor = styled.button`
    margin-top: 10px;
    font-family: ${MONO};
`

const SchemeButtons = styled.div`
    width: 101px;
    padding-top: 9px;
    display: flex;
    flex-direction: column;
    gap: 6px;
`

const PushButton = styled.button`
    height: 28px;
    width: ${p => (p.$w ? p.$w + 'px' : '100%')};
    border: ${p => (p.$primary ? '2px solid #0078d7' : '1px solid #adadad')};
    background: #e1e1e1;
`

const SchemeActions = styled.div`
    display: flex;
    flex-direction: column;
    gap: 8px;
    margin-bottom: 72px;
`

const FontHeading = styled.div`
    display: flex;
    align-items: flex-start;
    gap: 9px;
    height: 14px;
    &::after {
        content: "";
        flex: 1;
        margin: 4px 4px 0 0;
        border-top: 1px solid #a0a0a0;
    }
`

const DialogFooter = styled.div`
    display: flex;
    justify-content: flex-end;
    gap: 8px;
    padding: 4px 6px 6px;
    border-top: 1px solid #dfdfdf;
    background: #f0f0f0;
`

const Pointers = styled.svg`
    position: absolute;
    left: 0;
    top: 0;
    pointer-events: none;
`

const OPTION_GROUPS = [
    { items: ['常规', '内存', '多周期', '扩展统计', '升级与时间', '其他'] },
    { name: '行情设置', items: ['自动收盘', '数据与存储'] },
    { name: '外观设置', items: ['K线与分时图', '系统界面', '配色方案', '状态栏'] },
    { name: '交易设置', items: ['常规', '止损止盈', '追单撤单', '程式化交易', '风控', '帐户', '大单拆单', '算法拆单', '期货手工下单', '股票手工下单', '闪电下单界面'] },
]

const SCHEME_ITEMS = ['背景', '图形文字', '坐标', '坐标文字', '阳线', '阴线', '画线', '画线文字', '叠加', '分时数据线', '分时均价线', '分时图实心坐标', '分时量', '上涨']

const PALETTE = [
    '#000000', '#800000', '#008000', '#808000', '#000080', '#800080', '#008080',
    '#c0c0c0', '#c0dcc0', '#a6caf0', '#fffbf0', '#a0a0a4', '#808080', '#ff0000',
    '#00ff00', '#ffff00', '#0000ff', '#ff00ff', '#00ffff', '#ffffff',
]

const PREVIEW_LINES = [
    ['#0020c0', 60, 22], ['#ff0000', 65, 28], ['#c000ff', 70, 33], ['#008060', 75, 38],
    ['#ff60c0', 80, 44], ['#000000', 130, 101], ['#e07000', 140, 110],
]

const Preview = () => (
    <PreviewBox>
        <legend>预览</legend>
        <svg width="250" height="323" viewBox="0 0 250 323" fontSize="12" shapeRendering="crispEdges" role="img" aria-label="配色预览">
            <path d="M0 0h250v323H0z" fill="#800000" />
            <path d="M42 212h149" stroke="#0000f0" strokeWidth="222" strokeDasharray="1 1" />
            <path d="M20.500 0v323M20 30.500h230M20 60.500h230M20 90.500h230M20 120.500h230" stroke="#ddd" />
            {[0, 1, 2, 3, 4].map(i => (
                <g key={i}>
                    <path d={`M${37.5 + i * 34} 40v35`} stroke={GREEN} />
                    <rect x={33 + i * 34} y="47" width="8" height="15" fill={GREEN} />
                    <path d={`M${54.5 + i * 34} 25v7M${54.5 + i * 34} 46v12`} stroke="#f00" />
                    <rect x={50.5 + i * 34} y="32.5" width="8" height="14" fill="none" stroke="#f00" />
                </g>
            ))}
            {PREVIEW_LINES.map(([c, a, b]) => <path key={c} d={`M20 ${a}L250 ${b}`} stroke={c} />)}
            <path d="M0 319.500h250" stroke="#dcdcdc" />
            <text x="22" y="16" fill="#000">8888.88</text>
            <g fill="#909090">
                <text x="0" y="30">40</text><text x="0" y="60">30</text><text x="0" y="90">20</text><text x="0" y="120">10</text>
            </g>
        </svg>
        <PreviewTable>
            <thead><tr><th>列表项</th><th>列表1</th><th>列表2</th></tr></thead>
            <tbody>
                <tr className="up"><td>上涨字</td><td>99.99</td><td>99.99</td></tr>
                <tr className="flat"><td>平盘字</td><td>66.66</td><td>66.66</td></tr>
                <tr className="down"><td>下跌字</td><td>22.22</td><td>22.22</td></tr>
            </tbody>
        </PreviewTable>
    </PreviewBox>
)

const Folder = () => (
    <svg width="15" height="12" viewBox="0 0 15 12" aria-hidden="true">
        <path d="M1 10V2l1-1h4l1 1.500h6V10z" fill="#f8f070" stroke="#888" />
        <path d="M1 10.500L3 5h10.500L12 10.500z" fill="#fff68a" stroke="#777" />
        <path d="M2 11.500h12V3.500" fill="none" stroke="#000" />
    </svg>
)

const MinusBox = () => (
    <svg width="9" height="9" viewBox="0 0 9 9" aria-hidden="true">
        <rect x=".5" y=".5" width="8" height="8" fill="#fff" stroke="#919191" />
        <path d="M2 4.500h5" stroke="#2b4a94" />
    </svg>
)

const OptionsDialog = () => {
    const [page, setPage] = useState('配色方案')
    const [item, setItem] = useState('背景')
    const [color, setColor] = useState('#800000')

    return (
        <Dialog role="dialog" aria-label="选项">
            <DialogTitle>
                <span>选项</span>
                <button aria-label="关闭">
                    <svg width="11" height="11" viewBox="0 0 11 11" stroke="#000" strokeWidth="1.1"><path d="M.5.5l10 10M10.500.5l-10 10" /></svg>
                </button>
            </DialogTitle>
            <DialogBody>
                <OptionTreeBox>
                    <OptionTree>
                        {OPTION_GROUPS.map(({ name, items }, g) => (
                            <li key={g}>
                                {name && <GroupRow><MinusBox /><i /><Folder /><span>{name}</span></GroupRow>}
                                <Leaves>
                                    {items.map(text => {
                                        const selected = text === page
                                        return (
                                            <Leaf key={text} $selected={selected} onClick={() => setPage(text)}>
                                                {selected && (
                                                    <svg width="10" height="11" viewBox="0 0 10 11"><path d="M.5 3.500h4v-3l5 5-5 5v-3h-4z" fill="#aaa" stroke="#222" /></svg>
                                                )}
                                                <span>{text}</span>
                                            </Leaf>
                                        )
                                    })}
                                </Leaves>
                            </li>
                        ))}
                    </OptionTree>
                    <Scrollbar size={478} offset={18} />
                </OptionTreeBox>
                <DialogContent>
                    <Preview />
                    <SchemeColumn>
                        <SchemeRow>
                            <label htmlFor="scheme">配色方案(<u>P</u>):</label>
                            <SchemeSelect $w={140}>
                                <select id="scheme" defaultValue="浅色风格"><option>浅色风格</option></select>
                                <Chevron />
                            </SchemeSelect>
                        </SchemeRow>
                        <ListLabel id="scheme-data">方案数据(<u>R</u>):</ListLabel>
                        <SchemeCols>
                            <div>
                                <ListBox>
                                    <ul role="listbox" aria-labelledby="scheme-data">
                                        {SCHEME_ITEMS.map(t => (
                                            <ListItem key={t} role="option" aria-selected={t === item} $selected={t === item} onClick={() => setItem(t)}>{t}</ListItem>
                                        ))}
                                    </ul>
                                    <Scrollbar size={39} />
                                </ListBox>
                                <ColorPanel>
                                    <Swatches>
                                        {PALETTE.map(c => <Swatch key={c} $c={c} $selected={c === color} onClick={() => setColor(c)} aria-label={c} />)}
                                    </Swatches>
                                    <OtherColor>其他(<u>O</u>)...</OtherColor>
                                </ColorPanel>
                            </div>
                            <SchemeButtons>
                                <SchemeActions>
                                    <PushButton>导入方案</PushButton>
                                    <PushButton>导出方案</PushButton>
                                    <PushButton>恢复初始设置</PushButton>
                                </SchemeActions>
                                <FontHeading>字体</FontHeading>
                                {['图形字体', '列表字体', '资讯字体', '动态行情', '成交明细'].map(t => <PushButton key={t}>{t}</PushButton>)}
                            </SchemeButtons>
                        </SchemeCols>
                    </SchemeColumn>
                </DialogContent>
            </DialogBody>
            <DialogFooter>
                <PushButton $w={86} $primary>确定</PushButton>
                <PushButton $w={86}>取消</PushButton>
                <PushButton $w={86}>需要帮助?</PushButton>
            </DialogFooter>
            <Pointers width="727" height="599" viewBox="0 0 727 599" fill="#f34b3e" aria-hidden="true">
                <path d="M597 70l13 13-5-.5L649 288l-1 .5L598 85l-6 2.500z" />
                <path d="M412 234l55 95 6-3 1 17-17-10 5-1z" />
            </Pointers>
        </Dialog>
    )
}

/* ---------- page ---------- */

// "|" separator, ":" grip, "v" drop arrow, "_" low drop arrow, "*" pressed, "-" disabled
const TOOLS = [
    'home', '|', '*link', 'download', 'refresh', 'grid', 'v', '|', 'candles', 'bell', 'chartBox', '|',
    'play', 'doc', '$', 'v', 'filter', 'sort', '|', 'move', 'ruler', 'zoomIn', 'zoomOut', '|', 'gear', '_',
    ':', '*mouse', '|', 'line', 'v', 'percent', 'v', 'verticals', 'v', 'fan', 'v', 'channel', 'v', 'fork', 'v',
    'rect', 'v', 'circle', 'v', 'letterA', '|', 'magnet', 'copy', '-cross', '-trash', 'lock', 'pen', 'v', 'save', 'v', '|',
    '买', '卖', '平', '反', '_',
]

const renderTool = (t, i) => {
    if (t === '|') return <Separator key={i} />
    if (t === ':') return <Grip key={i} $w={10} />
    if (t === 'v' || t === '_') return <DropArrow key={i} $low={t === '_'} aria-label="更多"><TinyCaret /></DropArrow>
    if (t === '$') return <ToolButton key={i} $bold>$</ToolButton>
    const name = t.replace(/^[*-]/, '')
    if (!ICONS[name]) return <ToolButton key={i} $glyph>{t}</ToolButton>
    return <ToolButton key={i} $active={t[0] === '*'} $dim={t[0] === '-'} aria-label={name}><Icon name={name} /></ToolButton>
}

const App = () => (
    <Shell>
        <GlobalStyle />
        <TitleBar>
            <svg width="20" height="20" viewBox="0 0 20 20" aria-hidden="true">
                <rect x="1.5" y="1.5" width="17" height="17" fill="#fff" stroke="#e00000" strokeWidth="2.5" />
                <path d="M5 4h11l-2 3-2 2-5 2-3 3z" fill="#e81010" />
                <path d="M3.500 15.500L15 5l1.500 4-8 7.500z" fill="#d00000" />
            </svg>
            <TitleText>金字塔决策交易系统 - [600523]</TitleText>
            <TitleActions>
                <TitleButton aria-label="资讯"><Icon name="rss" size={18} color="#222" /></TitleButton>
                <UserButton aria-label="用户"><Icon name="user" color="#222" /><Badge>1</Badge></UserButton>
                <TitleButton aria-label="文档"><Icon name="news" color="#222" /></TitleButton>
                <TitleButton aria-label="商城"><Icon name="cart" color="#222" /></TitleButton>
                <TitleButton aria-label="公式"><Icon name="fx" size={19} color="#222" /></TitleButton>
                <TitleButton aria-label="Python"><Icon name="python" size={18} color="#222" /></TitleButton>
                <TitleButton aria-label="客服"><Icon name="headset" color="#222" /></TitleButton>
                <TitleButton aria-label="最小化"><Icon name="minimize" color="#b4b4b4" /></TitleButton>
                <TitleButton aria-label="还原"><Icon name="restore" color="#b4b4b4" /></TitleButton>
                <TitleButton aria-label="关闭"><Icon name="close" color="#b4b4b4" /></TitleButton>
            </TitleActions>
        </TitleBar>
        <StatusWindow>
            <span>交易状态 243002 : 已登录</span>
            <button aria-label="固定"><Pin /></button>
            <button aria-label="关闭"><SmallX /></button>
        </StatusWindow>
        <Toolbar>
            <Grip />
            {TOOLS.map(renderTool)}
        </Toolbar>
        <MenuBar>
            <Grip />
            {['文件(F)', '板块(M)', '画面(P)', '查看(V)', '交易(O)', '分析(A)', '工具(T)', '窗口(W)', '帮助(H)'].map(t => <MenuItem key={t}>{t}</MenuItem>)}
        </MenuBar>
        <Main>
            <Workspace>
                <UpperRow>
                    <Side />
                    <Charts />
                </UpperRow>
                <AccountPanel />
            </Workspace>
            <Insight>
                <PanelHead title="电脑解盘" />
                <InsightBody>创2天新高</InsightBody>
            </Insight>
            <PeriodBar>
                <PeriodDots />
                <PeriodButton aria-label="分时"><Icon name="trend" size={18} /></PeriodButton>
                {PERIODS.map(t => (
                    <PeriodButton key={t} $active={t === '日'}>{ICONS[t] ? <Icon name={t} size={20} /> : t}</PeriodButton>
                ))}
                <svg width="4" height="6" viewBox="0 0 4 6"><path d="M4 0v6L0 3z" fill="#777" /></svg>
            </PeriodBar>
        </Main>
        <OptionsDialog />
    </Shell>
)

export default App
